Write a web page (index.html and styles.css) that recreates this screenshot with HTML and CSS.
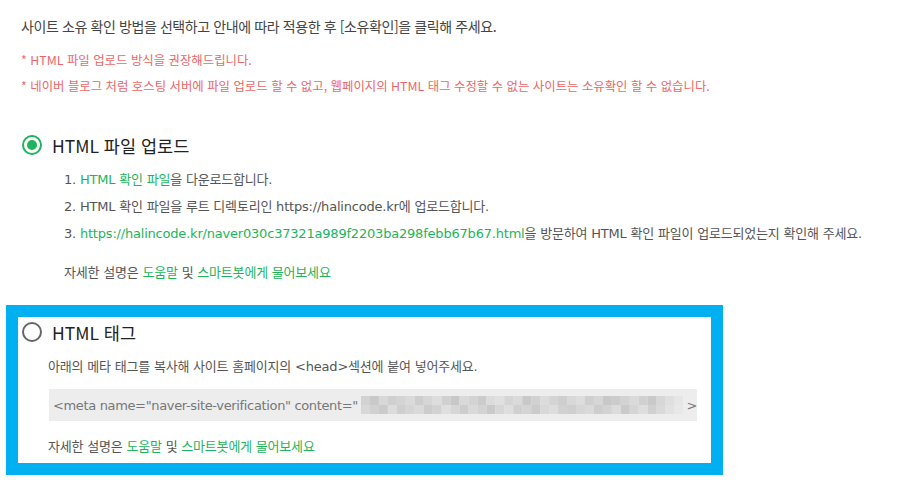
FILE: index.html
```html
<!DOCTYPE html>
<html lang="ko">
  <head>
    <meta charset="UTF-8" />
    <meta name="viewport" content="width=device-width, initial-scale=1.0" />
    <title>사이트 소유 확인</title>
    <link rel="stylesheet" href="styles.css">
  </head>
  <body>
    <div class="container">
      <p class="intro">사이트 소유 확인 방법을 선택하고 안내에 따라 적용한 후 [소유확인]을 클릭해 주세요.</p>
      <ul class="notes">
        <li>* HTML 파일 업로드 방식을 권장해드립니다.</li>
        <li>* 네이버 블로그 처럼 호스팅 서버에 파일 업로드 할 수 없고, 웹페이지의 HTML 태그 수정할 수 없는 사이트는 소유확인 할 수 없습니다.</li>
      </ul>

      <div class="option">
        <label class="option-title">
          <span class="radio checked"></span>
          <span>HTML 파일 업로드</span>
        </label>
        <ol class="steps">
          <li>1. <a href="#" class="link">HTML 확인 파일</a>을 다운로드합니다.</li>
          <li>2. HTML 확인 파일을 루트 디렉토리인 https://halincode.kr에 업로드합니다.</li>
          <li>3. <a href="#" class="link">https://halincode.kr/naver030c37321a989f2203ba298febb67b67.html</a>을 방문하여 HTML 확인 파일이 업로드되었는지 확인해 주세요.</li>
        </ol>
        <p class="help">자세한 설명은 <a href="#" class="link">도움말</a> 및 <a href="#" class="link">스마트봇에게 물어보세요</a></p>
      </div>

      <div class="option option-tag">
        <label class="option-title">
          <span class="radio"></span>
          <span>HTML 태그</span>
        </label>
        <p class="desc">아래의 메타 태그를 복사해 사이트 홈페이지의 &lt;head&gt;섹션에 붙여 넣어주세요.</p>
        <div class="code">
          <span>&lt;meta name="naver-site-verification" content="</span>
          <svg class="blur" width="324" height="18" viewBox="0 0 36 2" preserveAspectRatio="none">
            <rect x="0" y="0" width="1" height="1" fill="#d2d2d2"/><rect x="1" y="0" width="1" height="1" fill="#c9c9c9"/>
            <rect x="2" y="0" width="1" height="1" fill="#d8d8d8"/><rect x="3" y="0" width="1" height="1" fill="#cfcfcf"/>
            <rect x="4" y="0" width="1" height="1" fill="#d4d4d4"/><rect x="5" y="0" width="1" height="1" fill="#dadada"/>
            <rect x="6" y="0" width="1" height="1" fill="#cdcdcd"/><rect x="7" y="0" width="1" height="1" fill="#d6d6d6"/>
            <rect x="8" y="0" width="1" height="1" fill="#dddddd"/><rect x="9" y="0" width="1" height="1" fill="#d0d0d0"/>
            <rect x="10" y="0" width="1" height="1" fill="#c8c8c8"/><rect x="11" y="0" width="1" height="1" fill="#d9d9d9"/>
            <rect x="12" y="0" width="1" height="1" fill="#d3d3d3"/><rect x="13" y="0" width="1" height="1" fill="#cbcbcb"/>
            <rect x="14" y="0" width="1" height="1" fill="#dcdcdc"/><rect x="15" y="0" width="1" height="1" fill="#e0e0e0"/>
            <rect x="16" y="0" width="1" height="1" fill="#d5d5d5"/><rect x="17" y="0" width="1" height="1" fill="#dadada"/>
            <rect x="18" y="0" width="1" height="1" fill="#c9c9c9"/><rect x="19" y="0" width="1" height="1" fill="#d1d1d1"/>
            <rect x="20" y="0" width="1" height="1" fill="#dcdcdc"/><rect x="21" y="0" width="1" height="1" fill="#d4d4d4"/>
            <rect x="22" y="0" width="1" height="1" fill="#cecece"/><rect x="23" y="0" width="1" height="1" fill="#d8d8d8"/>
            <rect x="24" y="0" width="1" height="1" fill="#dddddd"/><rect x="25" y="0" width="1" height="1" fill="#cfcfcf"/>
            <rect x="26" y="0" width="1" height="1" fill="#d6d6d6"/><rect x="27" y="0" width="1" height="1" fill="#c8c8c8"/>
            <rect x="28" y="0" width="1" height="1" fill="#cccccc"/><rect x="29" y="0" width="1" height="1" fill="#d3d3d3"/>
            <rect x="30" y="0" width="1" height="1" fill="#dadada"/><rect x="31" y="0" width="1" height="1" fill="#d0d0d0"/>
            <rect x="32" y="0" width="1" height="1" fill="#c9c9c9"/><rect x="33" y="0" width="1" height="1" fill="#d7d7d7"/>
            <rect x="34" y="0" width="1" height="1" fill="#dfdfdf"/><rect x="35" y="0" width="1" height="1" fill="#e6e6e6"/>
            <rect x="0" y="1" width="1" height="1" fill="#d8d8d8"/><rect x="1" y="1" width="1" height="1" fill="#d1d1d1"/>
            <rect x="2" y="1" width="1" height="1" fill="#cbcbcb"/><rect x="3" y="1" width="1" height="1" fill="#dcdcdc"/>
            <rect x="4" y="1" width="1" height="1" fill="#cfcfcf"/><rect x="5" y="1" width="1" height="1" fill="#d5d5d5"/>
            <rect x="6" y="1" width="1" height="1" fill="#dadada"/><rect x="7" y="1" width="1" height="1" fill="#cccccc"/>
            <rect x="8" y="1" width="1" height="1" fill="#d2d2d2"/><rect x="9" y="1" width="1" height="1" fill="#dfdfdf"/>
            <rect x="10" y="1" width="1" height="1" fill="#d6d6d6"/><rect x="11" y="1" width="1" height="1" fill="#cdcdcd"/>
            <rect x="12" y="1" width="1" height="1" fill="#d9d9d9"/><rect x="13" y="1" width="1" height="1" fill="#d3d3d3"/>
            <rect x="14" y="1" width="1" height="1" fill="#cacaca"/><rect x="15" y="1" width="1" height="1" fill="#d7d7d7"/>
            <rect x="16" y="1" width="1" height="1" fill="#dedede"/><rect x="17" y="1" width="1" height="1" fill="#d0d0d0"/>
            <rect x="18" y="1" width="1" height="1" fill="#d4d4d4"/><rect x="19" y="1" width="1" height="1" fill="#cbcbcb"/>
            <rect x="20" y="1" width="1" height="1" fill="#d8d8d8"/><rect x="21" y="1" width="1" height="1" fill="#dddddd"/>
            <rect x="22" y="1" width="1" height="1" fill="#d1d1d1"/><rect x="23" y="1" width="1" height="1" fill="#cfcfcf"/>
            <rect x="24" y="1" width="1" height="1" fill="#d6d6d6"/><rect x="25" y="1" width="1" height="1" fill="#dadada"/>
            <rect x="26" y="1" width="1" height="1" fill="#cdcdcd"/><rect x="27" y="1" width="1" height="1" fill="#d3d3d3"/>
            <rect x="28" y="1" width="1" height="1" fill="#dcdcdc"/><rect x="29" y="1" width="1" height="1" fill="#cacaca"/>
            <rect x="30" y="1" width="1" height="1" fill="#d5d5d5"/><rect x="31" y="1" width="1" height="1" fill="#dedede"/>
            <rect x="32" y="1" width="1" height="1" fill="#d0d0d0"/><rect x="33" y="1" width="1" height="1" fill="#d9d9d9"/>
            <rect x="34" y="1" width="1" height="1" fill="#e2e2e2"/><rect x="35" y="1" width="1" height="1" fill="#e8e8e8"/>
          </svg>
          <span class="end">&gt;</span>
        </div>
        <p class="help">자세한 설명은 <a href="#" class="link">도움말</a> 및 <a href="#" class="link">스마트봇에게 물어보세요</a></p>
      </div>
    </div>
  </body>
</html>
```

FILE: styles.css
```css
* {
  padding: 0px;
  margin: 0px;
  box-sizing: border-box;
}

body {
  background: #fff;
  color: #555;
  font-family: "Noto Sans CJK KR", "Noto Sans", sans-serif;
}

ul,
ol {
  list-style: none;
}

.container {
  padding: 16px 6px 0 6px;
}

.intro {
  padding-left: 15px;
  font-size: 14px;
  line-height: 20px;
  color: #444;
  letter-spacing: -0.4px;
}

.notes {
  margin-top: 11px;
  padding-left: 15px;
  font-size: 12.4px;
  line-height: 26px;
  color: #eb6767;
}

.option {
  padding-left: 16px;
  margin-top: 36px;
}

.option-title {
  display: flex;
  align-items: center;
  gap: 10px;
  height: 20px;
  font-size: 17.5px;
  color: #222;
  cursor: pointer;
}

.radio {
  width: 20px;
  height: 20px;
  border-radius: 50%;
  border: 2px solid #666;
  flex-shrink: 0;
  display: flex;
  align-items: center;
  justify-content: center;
}

.radio.checked {
  border: 2.5px solid #1db45b;
}

.radio.checked::after {
  content: "";
  width: 10px;
  height: 10px;
  border-radius: 50%;
  background: #1db45b;
}

.steps,
.help,
.desc,
.code {
  font-family: "DejaVu Sans", "Noto Sans CJK KR", sans-serif;
  font-size: 13px;
  letter-spacing: -0.2px;
}

.steps {
  margin-top: 11px;
  padding-left: 42px;
  line-height: 27px;
}

.link {
  color: #1db45b;
  text-decoration: none;
}

.help {
  margin-top: 16px;
  padding-left: 42px;
  line-height: 20px;
}

.option-tag {
  margin-top: 22px;
  width: 717px;
  border: 12px solid #00b0f0;
  padding: 5px 0 6px 4px;
}

.option-tag .help {
  padding-left: 26px;
}

.desc {
  margin-top: 15px;
  padding-left: 26px;
  line-height: 20px;
}

.code {
  margin-top: 12px;
  margin-left: 27px;
  width: 648px;
  height: 32px;
  background: #ededed;
  display: flex;
  align-items: center;
  padding-left: 4px;
  color: #777;
  white-space: nowrap;
  letter-spacing: -0.35px;
}

.blur {
  margin-left: 3px;
  display: block;
}

.end {
  margin-left: 3px;
}
```
